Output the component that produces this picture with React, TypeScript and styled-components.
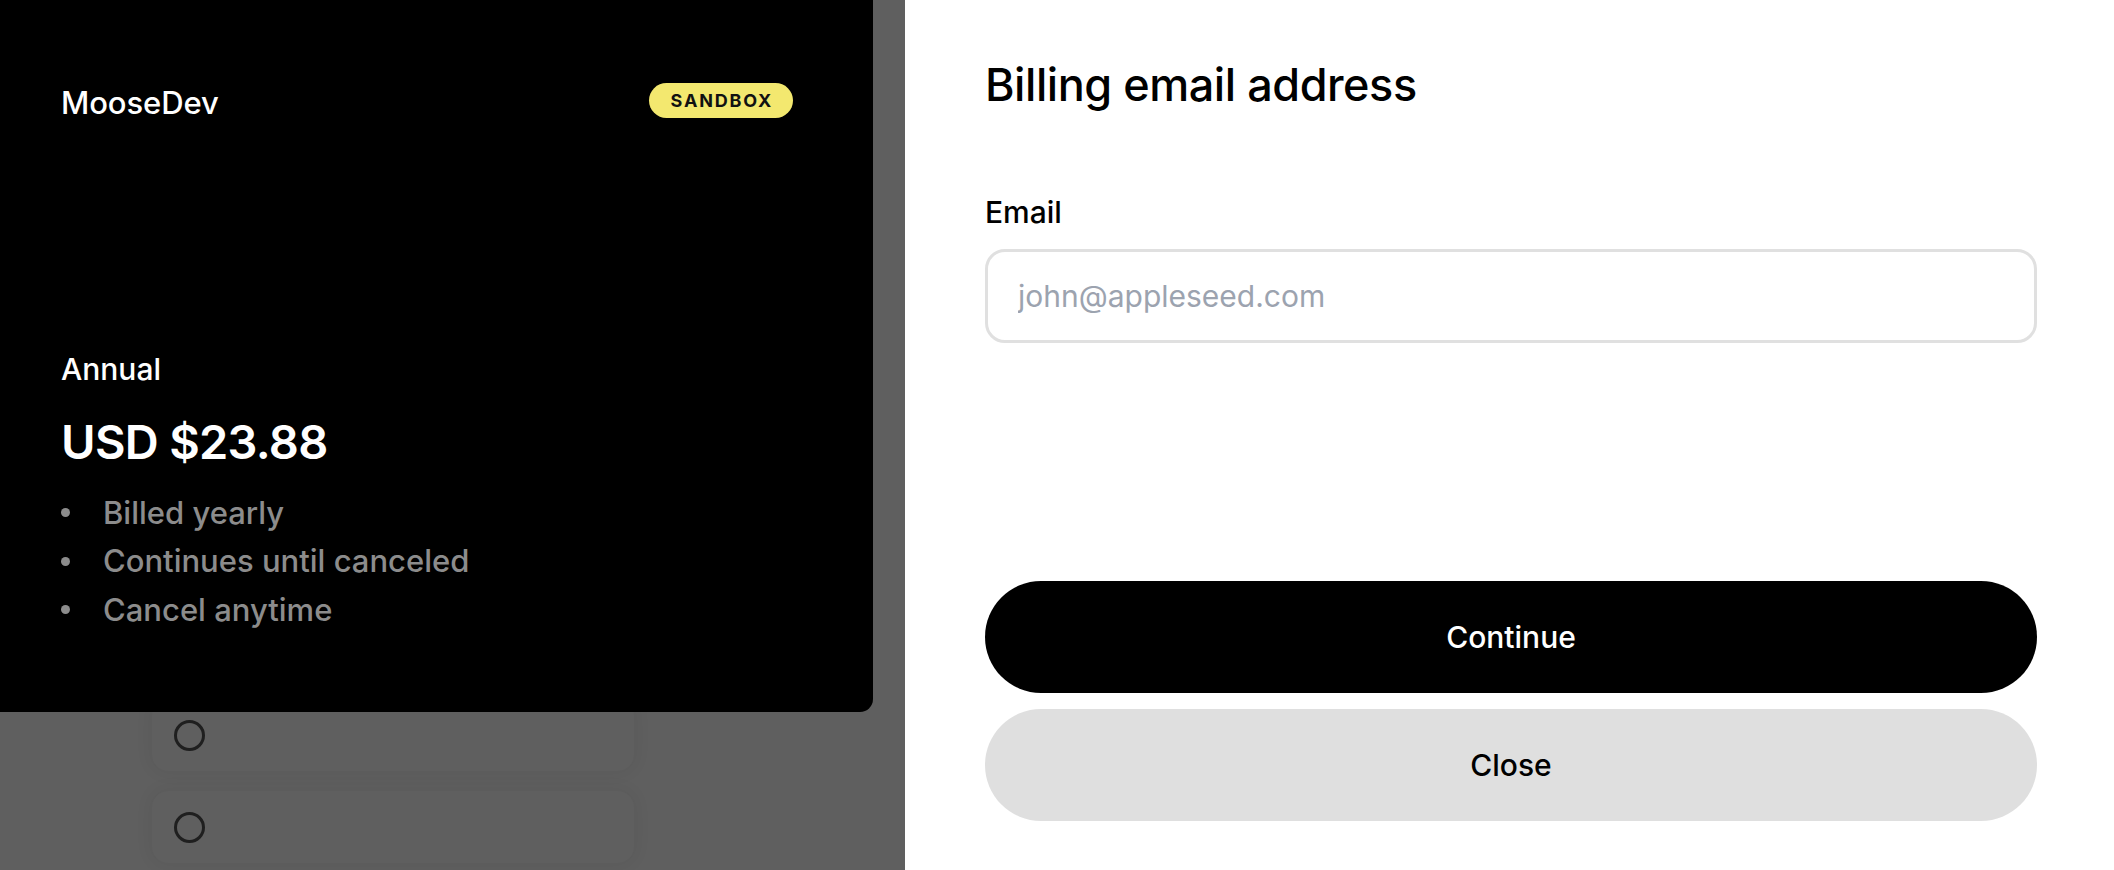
import React from "react";
import styled, { createGlobalStyle } from "styled-components";

const GlobalStyle = createGlobalStyle`
  html, body {
    margin: 0;
    padding: 0;
    background: #ffffff;
  }
  body {
    font-family: Inter, "Noto Sans", "Liberation Sans", sans-serif;
    -webkit-font-smoothing: antialiased;
  }
  * { box-sizing: border-box; }
`;

const Page = styled.div`
  display: flex;
  width: 2114px;
  height: 870px;
  overflow: hidden;
`;

const Backdrop = styled.div`
  width: 905px;
  flex: 0 0 905px;
  background: #5f5f5f;
  display: flex;
  flex-direction: column;
`;

const SummaryPanel = styled.section`
  position: relative;
  z-index: 1;
  width: 873px;
  height: 712px;
  background: #000000;
  border-bottom-right-radius: 13px;
  padding: 83px 80px 78px 61px;
  display: flex;
  flex-direction: column;
  justify-content: space-between;
  color: #ffffff;
`;

const HeaderRow = styled.div`
  display: flex;
  align-items: center;
  justify-content: space-between;
  height: 35px;
`;

const Brand = styled.div`
  font-size: 31px;
  line-height: 35px;
  font-weight: 500;
  letter-spacing: -0.1px;
  padding-top: 3px;
`;

const Badge = styled.span`
  display: inline-flex;
  align-items: center;
  justify-content: center;
  height: 35px;
  padding: 0 20px 0 22px;
  border-radius: 18px;
  background: #f3e86f;
  color: #111111;
  font-size: 18px;
  font-weight: 700;
  letter-spacing: 1.8px;
`;

const Plan = styled.div`
  display: flex;
  flex-direction: column;
`;

const PlanName = styled.div`
  font-size: 30px;
  line-height: 36px;
  font-weight: 500;
  letter-spacing: 0;
`;

const Price = styled.div`
  margin-top: 27px;
  font-size: 47px;
  line-height: 56px;
  font-weight: 600;
  letter-spacing: -0.7px;
`;

const Features = styled.ul`
  list-style: none;
  margin: 19px 0 0;
  padding: 0;
`;

const Feature = styled.li`
  display: flex;
  align-items: center;
  gap: 33px;
  font-size: 31px;
  line-height: 48.5px;
  font-weight: 500;
  color: #8c8c8c;
  letter-spacing: 0;
`;

const Dot = styled.span`
  width: 9px;
  height: 9px;
  border-radius: 50%;
  background: #8c8c8c;
  flex: 0 0 9px;
`;

const BehindList = styled.div`
  display: flex;
  flex-direction: column;
  gap: 20px;
  padding-left: 152px;
  margin-top: -13px;
`;

const BehindCard = styled.div`
  width: 482px;
  height: 72px;
  border-radius: 16px;
  background: #5f5f5f;
  box-shadow: 0 0 18px rgba(0, 0, 0, 0.07);
  display: flex;
  align-items: center;
  padding-left: 22px;
`;

const Radio = styled.span`
  width: 31px;
  height: 31px;
  border-radius: 50%;
  border: 3.5px solid #1f1f1f;
`;

const FormPanel = styled.section`
  flex: 1;
  background: #ffffff;
  padding: 57px 77px 49px 80px;
  display: flex;
  flex-direction: column;
`;

const Title = styled.h1`
  margin: 0;
  font-size: 45px;
  line-height: 56px;
  font-weight: 500;
  letter-spacing: -0.45px;
  color: #000000;
`;

const Label = styled.label`
  margin-top: 81px;
  font-size: 30px;
  line-height: 36px;
  font-weight: 500;
  letter-spacing: 0;
  color: #000000;
`;

const EmailInput = styled.input`
  margin-top: 19px;
  height: 94px;
  width: 100%;
  border: 3px solid #e0e0e0;
  border-radius: 20px;
  padding: 0 30px;
  font-family: Inter, "Noto Sans", "Liberation Sans", sans-serif;
  font-size: 30px;
  color: #111111;
  background: #ffffff;
  outline: none;
  &::placeholder {
    color: #9ca3af;
  }
`;

const Actions = styled.div`
  margin-top: auto;
  display: flex;
  flex-direction: column;
  gap: 16px;
`;

const ActionButton = styled.button<{ $primary?: boolean }>`
  height: 112px;
  width: 100%;
  border: none;
  border-radius: 56px;
  background: ${(p) => (p.$primary ? "#000000" : "#dfdfdf")};
  color: ${(p) => (p.$primary ? "#ffffff" : "#000000")};
  font-family: Inter, "Noto Sans", "Liberation Sans", sans-serif;
  font-size: 30px;
  font-weight: 500;
  letter-spacing: 0;
  cursor: pointer;
`;

const features = ["Billed yearly", "Continues until canceled", "Cancel anytime"];

export default function App() {
  return (
    <>
      <GlobalStyle />
      <Page>
        <Backdrop>
          <SummaryPanel>
            <HeaderRow>
              <Brand>MooseDev</Brand>
              <Badge>SANDBOX</Badge>
            </HeaderRow>
            <Plan>
              <PlanName>Annual</PlanName>
              <Price>USD $23.88</Price>
              <Features>
                {features.map((f) => (
                  <Feature key={f}>
                    <Dot />
                    {f}
                  </Feature>
                ))}
              </Features>
            </Plan>
          </SummaryPanel>
          <BehindList>
            <BehindCard>
              <Radio />
            </BehindCard>
            <BehindCard>
              <Radio />
            </BehindCard>
          </BehindList>
        </Backdrop>
        <FormPanel>
          <Title>Billing email address</Title>
          <Label htmlFor="email">Email</Label>
          <EmailInput id="email" type="email" placeholder="john@appleseed.com" />
          <Actions>
            <ActionButton $primary>Continue</ActionButton>
            <ActionButton>Close</ActionButton>
          </Actions>
        </FormPanel>
      </Page>
    </>
  );
}
